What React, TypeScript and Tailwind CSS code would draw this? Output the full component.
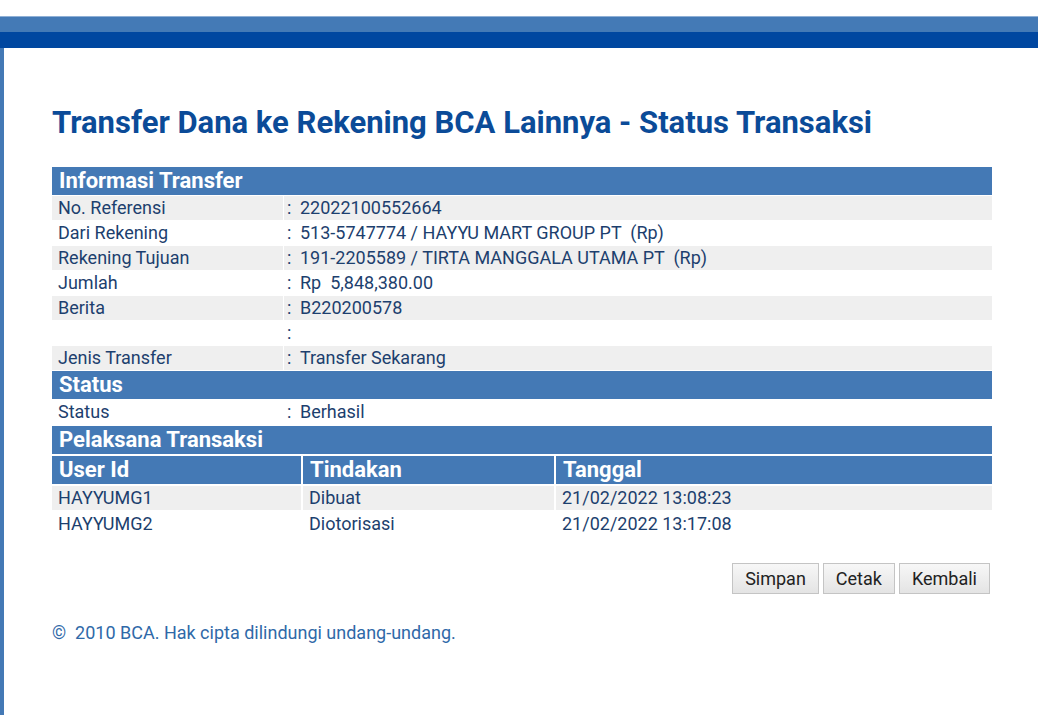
import React from 'react';

const infoRows: [string, string][] = [
  ['No. Referensi', '22022100552664'],
  ['Dari Rekening', '513-5747774 / HAYYU MART GROUP PT  (Rp)'],
  ['Rekening Tujuan', '191-2205589 / TIRTA MANGGALA UTAMA PT  (Rp)'],
  ['Jumlah', 'Rp  5,848,380.00'],
  ['Berita', 'B220200578'],
  ['', ''],
  ['Jenis Transfer', 'Transfer Sekarang'],
];

const pelaksana: [string, string, string][] = [
  ['HAYYUMG1', 'Dibuat', '21/02/2022 13:08:23'],
  ['HAYYUMG2', 'Diotorisasi', '21/02/2022 13:17:08'],
];

const SectionHead = ({ title }: { title: string }) => (
  <div className="h-[28px] bg-[#4479b5] px-[7px] flex items-center text-white font-bold text-[22px] leading-none">
    {title}
  </div>
);

const InfoRow = ({ label, value, shaded }: { label: string; value: string; shaded: boolean }) => (
  <div className="flex gap-[1px] h-[24px] text-[18px] leading-none text-[#1d3f6e]">
    <div className={`w-[231px] flex items-center px-[6px] ${shaded ? 'bg-[#efefef]' : 'bg-white'}`}>{label}</div>
    <div className={`flex-1 flex items-center pl-[3px] whitespace-pre ${shaded ? 'bg-[#efefef]' : 'bg-white'}`}>
      <span className="w-[13px]">:</span>
      <span>{value}</span>
    </div>
  </div>
);

export default function App() {
  return (
    <div className="w-[1038px] h-[715px] bg-white overflow-hidden" style={{ fontFamily: 'Roboto, "Liberation Sans", sans-serif' }}>
      <div className="h-[16px] bg-white" />
      <div className="h-[16px] bg-[#447ab6] border-t border-[#8fb0d6]" />
      <div className="h-[16px] bg-[#0047a0]" />
      <div className="flex h-[667px]">
        <div className="w-[4px] bg-[#4479b5]" />
        <div className="flex-1 pl-[48px] pr-[46px]">
          <h1 className="mt-[59px] text-[31px] font-bold text-[#0b4b98] leading-none">
            Transfer Dana ke Rekening BCA Lainnya - Status Transaksi
          </h1>

          <div className="mt-[29px] flex flex-col gap-[1px]">
            <SectionHead title="Informasi Transfer" />
            {infoRows.map(([l, v], i) => (
              <InfoRow key={i} label={l} value={v} shaded={i % 2 === 0} />
            ))}
            <SectionHead title="Status" />
            <InfoRow label="Status" value="Berhasil" shaded={false} />
          </div>

          <div className="mt-[2px] flex flex-col gap-[1px]">
            <SectionHead title="Pelaksana Transaksi" />
            <div className="grid grid-cols-[249px_251px_1fr] gap-[2px] mt-[1px]">
              {['User Id', 'Tindakan', 'Tanggal'].map((h) => (
                <div key={h} className="h-[28px] bg-[#4479b5] px-[7px] flex items-center text-white font-bold text-[22px] leading-none">
                  {h}
                </div>
              ))}
            </div>
            {pelaksana.map((r, i) => (
              <div key={i} className="grid grid-cols-[249px_251px_1fr] gap-[2px] mt-[1px]">
                {r.map((c, j) => (
                  <div
                    key={j}
                    className={`h-[24px] px-[6px] flex items-center text-[18px] leading-none text-[#1d3f6e] ${i === 0 ? 'bg-[#efefef]' : 'bg-white'}`}
                  >
                    {c}
                  </div>
                ))}
              </div>
            ))}
          </div>

          <div className="mt-[27px] flex justify-end gap-[4px] pr-[2px]">
            {['Simpan', 'Cetak', 'Kembali'].map((b) => (
              <button
                key={b}
                className="h-[31px] px-[12px] border border-[#c4c4c4] bg-gradient-to-b from-[#f7f7f7] to-[#e4e4e4] text-[18px] leading-none text-[#222]"
              >
                {b}
              </button>
            ))}
          </div>

          <div className="mt-[30px] text-[18px] text-[#2f69a8] leading-none whitespace-pre">©  2010 BCA. Hak cipta dilindungi undang-undang.</div>
        </div>
      </div>
    </div>
  );
}
